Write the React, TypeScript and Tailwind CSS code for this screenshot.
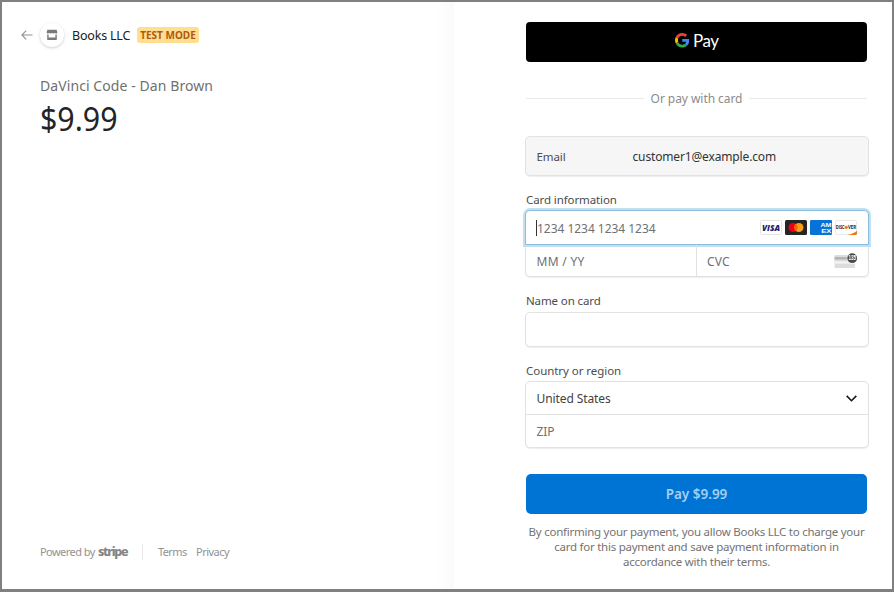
import React from "react";

function StoreIcon() {
  return (
    <svg width="12" height="12" viewBox="0 0 12 12" fill="#7b7b7b" className="block">
      <path d="M1.400 0.800h9.200L11.400 3.200c0 .8-.6 1.300-1.400 1.300-.6 0-1-.2-1.300-.5-.3.3-.8.500-1.300.500S6.300 4.300 6 4c-.3.300-.8.500-1.400.500s-1-.2-1.300-.5c-.3.300-.7.500-1.300.500-.8 0-1.400-.5-1.400-1.300z" />
      <path d="M1.200 5.500h1.400v3.100h6.800V5.500h1.400v4.900c0 .3-.2.500-.5.500H1.700c-.3 0-.5-.2-.5-.5z" />
    </svg>
  );
}

function GoogleG() {
  return (
    <svg width="14.500" height="14.500" viewBox="0 0 48 48" className="mb-[3px] block">
      <path fill="#EA4335" d="M24 9.500c3.540 0 6.710 1.220 9.210 3.600l6.850-6.850C35.900 2.380 30.470 0 24 0 14.620 0 6.510 5.380 2.560 13.220l7.980 6.190C12.430 13.720 17.740 9.500 24 9.500z" />
      <path fill="#4285F4" d="M46.980 24.550c0-1.570-.15-3.090-.38-4.550H24v9.020h12.940c-.58 2.960-2.260 5.480-4.780 7.180l7.730 6c4.510-4.180 7.090-10.360 7.090-17.650z" />
      <path fill="#FBBC05" d="M10.530 28.590c-.48-1.450-.76-2.990-.76-4.590s.27-3.140.76-4.590l-7.980-6.190C.92 16.460 0 20.120 0 24c0 3.880.92 7.540 2.560 10.780l7.970-6.190z" />
      <path fill="#34A853" d="M24 48c6.480 0 11.930-2.130 15.890-5.810l-7.730-6c-2.150 1.450-4.920 2.300-8.160 2.300-6.260 0-11.570-4.220-13.470-9.910l-7.980 6.190C6.510 42.620 14.620 48 24 48z" />
    </svg>
  );
}

function Visa() {
  return (
    <svg width="22" height="15" viewBox="0 0 22 15" className="block">
      <rect x="0.500" y="0.500" width="21" height="14" rx="1.200" fill="#fff" stroke="#e4e4e4" />
      <text x="2" y="10.800" textLength="18" lengthAdjust="spacingAndGlyphs" fontFamily="Open Sans, sans-serif" fontSize="8.800" fontWeight="800" fontStyle="italic" fill="#191e70">VISA</text>
    </svg>
  );
}

function Mastercard() {
  return (
    <svg width="22" height="15" viewBox="0 0 22 15" className="block">
      <rect width="22" height="15" rx="1.500" fill="#252525" />
      <circle cx="8.100" cy="7.500" r="4.600" fill="#eb001b" />
      <circle cx="13.900" cy="7.500" r="4.600" fill="#f79e1b" />
      <path d="M11 3.930a4.600 4.600 0 0 1 0 7.140a4.600 4.600 0 0 1 0-7.140z" fill="#ff5f00" />
    </svg>
  );
}

function Amex() {
  return (
    <svg width="22" height="15" viewBox="0 0 22 15" className="block">
      <rect width="22" height="15" rx="1.200" fill="#0674d6" />
      <text x="10.500" y="6.900" textLength="11" lengthAdjust="spacingAndGlyphs" fontFamily="Liberation Sans, sans-serif" fontSize="6" fontWeight="700" fill="#fff">AM</text>
      <text x="11.200" y="13" textLength="10.300" lengthAdjust="spacingAndGlyphs" fontFamily="Liberation Sans, sans-serif" fontSize="6" fontWeight="700" fill="#fff">EX</text>
    </svg>
  );
}

function Discover() {
  return (
    <svg width="22" height="15" viewBox="0 0 22 15" className="block">
      <rect x="0.500" y="0.500" width="21" height="14" rx="1.200" fill="#fff" stroke="#e8e8e8" />
      <path d="M22 10.800v2.700c0 .8-.5 1.500-1.400 1.500H12.500C16.500 14.200 19.600 12.900 22 10.800z" fill="#f27712" />
      <text x="0.800" y="8.900" textLength="8.800" lengthAdjust="spacingAndGlyphs" fontFamily="Open Sans, sans-serif" fontSize="4.400" fontWeight="700" fill="#222">DISC</text>
      <circle cx="11.200" cy="7.300" r="1.600" fill="#f27712" />
      <text x="13" y="8.900" textLength="8.200" lengthAdjust="spacingAndGlyphs" fontFamily="Open Sans, sans-serif" fontSize="4.400" fontWeight="700" fill="#222">VER</text>
    </svg>
  );
}

function CvcIcon() {
  return (
    <svg width="24" height="20" viewBox="0 -2 24 20" className="block">
      <rect x="0.500" y="2" width="20.500" height="13" rx="1.200" fill="#dcdcdc" />
      <rect x="0.500" y="4" width="20.500" height="2.600" fill="#b5b5b5" />
      <rect x="0.500" y="8.300" width="20.500" height="2.300" fill="#f3f3f3" />
      <circle cx="18.200" cy="5.200" r="5.400" fill="#fff" />
      <circle cx="18.200" cy="5.200" r="4.900" fill="#4a4a4a" />
      <text x="14.500" y="7.400" textLength="7.400" lengthAdjust="spacingAndGlyphs" fontFamily="Liberation Sans, sans-serif" fontSize="6.400" fontWeight="600" fill="#fff">135</text>
    </svg>
  );
}

const box = "rounded-[5px] border border-[#e2e2e2] bg-white shadow-[0_1px_1px_rgba(0,0,0,0.07)]";
const label = "ml-[2px] block h-[18px] text-[11.500px] leading-[18px] text-[#4c4c4c]";

export default function App() {
  return (
    <div className="flex h-[592px] w-[894px] overflow-hidden border-2 border-b-3 border-[#827f7f] bg-white font-['Noto_Sans',sans-serif] text-[12px] whitespace-nowrap text-[#6f7175]">
      <aside className="flex w-[452px] shrink-0 flex-col bg-[linear-gradient(to_right,#fff_434px,#fafafa_452px)] pt-[19px] pr-4 pb-[28px] pl-[19px]">
        <header className="flex h-[27px] items-center">
          <svg width="12" height="12" viewBox="0 0 12 12" fill="none" stroke="#929292" strokeWidth="1.100" className="block">
            <path d="M11.500 6H1M5.200 1.700L0.900 6l4.300 4.300" />
          </svg>
          <div className="ml-[7px] flex size-[24px] items-center justify-center rounded-full bg-white shadow-[0_1px_3px_rgba(0,0,0,0.2)]">
            <StoreIcon />
          </div>
          <span className="ml-2 w-[58px] pt-[3px] text-[12.500px] tracking-[-0.2px] text-[#202020]">Books LLC</span>
          <span className="ml-[7px] flex h-4 w-[62px] items-center justify-center rounded-[3px] bg-[#ffde92] pt-px text-[10px] font-bold text-[#ae5a0c]">TEST MODE</span>
        </header>
        <div className="mt-[28px] ml-[19px]">
          <div className="text-[14px] leading-5 tracking-[0.08px] text-[#707070]">DaVinci Code - Dan Brown</div>
          <div className="mt-[3px] w-[84px] origin-left scale-x-[0.92] text-[33px] leading-[40px] text-[#242424]">$9.99</div>
        </div>
        <footer className="mt-auto ml-[19px] flex h-[18px] items-center text-[11px] text-[#929292]">
          <span className="w-[55px] tracking-[-0.55px]">Powered by</span>
          <span className="ml-[3px] w-[30px] text-[12.500px] font-extrabold tracking-[-1.3px] text-[#858585]">stripe</span>
          <span className="ml-[14px] h-4 w-px bg-[#e8e8e8]" />
          <span className="ml-[15px] w-[29px] tracking-[-0.6px]">Terms</span>
          <span className="ml-[9px] tracking-[-0.500px]">Privacy</span>
        </footer>
      </aside>

      <main className="ml-[70px] flex w-[346px] shrink-0 flex-col pt-5">
        <button className="mr-[3px] ml-[2px] flex h-[40px] items-center justify-center rounded-[4px] bg-black">
          <GoogleG />
          <span className="mb-[2px] ml-[4px] font-['Lato',sans-serif] text-[17px] leading-5 tracking-[-0.500px] text-white">Pay</span>
        </button>
        <div className="mr-[3px] ml-[2px] mt-[26px] flex h-5 items-center">
          <span className="h-px flex-1 bg-[#e9e9e9]" />
          <span className="mx-[7px] pt-px tracking-[-0.06px] text-[#8c8c8c]">Or pay with card</span>
          <span className="h-px flex-1 bg-[#e9e9e9]" />
        </div>
        <div className={`${box} mx-px mt-[28px] flex h-[40px] items-center bg-[#f6f6f6]! pt-px pl-[10.500px] text-[#4c4c4c]`}>
          <span className="w-[96px] text-[11.500px] tracking-[-0.1px]">Email</span>
          <span className="tracking-[-0.15px] text-[#333]">customer1@example.com</span>
        </div>

        <label className={`${label} mt-[15px] tracking-[-0.1px]`}>Card information</label>
        <div className={`${box} mx-px mt-px h-[67px]`}>
          <div className="-m-px flex h-[35px] items-center rounded-t-[5px] border border-[#88bddc] bg-white pr-[11px] pl-[10px] shadow-[0_0_0_2px_#c3e0f1]">
            <span className="h-4 w-px bg-[#333]" />
            <span className="flex-1 pt-[2px] tracking-[-0.03px]">1234 1234 1234 1234</span>
            <div className="flex gap-[3px]">
              <Visa /><Mastercard /><Amex /><Discover />
            </div>
          </div>
          <div className="flex h-[33px] pt-px">
            <div className="flex w-[171px] items-center border-r border-[#e2e2e2] pt-px pl-[10.500px] tracking-[0.3px]">MM / YY</div>
            <div className="flex flex-1 items-center justify-between pr-[10px] pl-[10px]">
              <span className="pt-px tracking-[0.2px]">CVC</span><CvcIcon />
            </div>
          </div>
        </div>

        <label className={`${label} mt-[15px] tracking-[-0.12px]`}>Name on card</label>
        <div className={`${box} mx-px mt-[2px] h-[35px]`} />

        <label className={`${label} mt-[15px] tracking-[-0.05px]`}>Country or region</label>
        <div className={`${box} mx-px mt-px h-[67px]`}>
          <div className="flex h-[33px] items-center justify-between border-b border-[#e2e2e2] pt-px pr-[11px] pl-[10.500px] text-[#424242]">
            <span className="tracking-[-0.1px]">United States</span>
            <svg width="11" height="7" viewBox="0 0 11 7" fill="none" stroke="#161616" strokeWidth="1.600" className="block">
              <path d="M0.700 0.900L5.500 5.700L10.300 0.900" />
            </svg>
          </div>
          <div className="flex h-[32px] items-center pt-px pl-[10.500px] tracking-[-0.1px]">ZIP</div>
        </div>

        <button className="mr-[3px] ml-[2px] mt-[26px] flex h-[40px] items-center justify-center rounded-[5px] bg-[#0074d4] pt-px text-[13.500px] font-semibold text-[#a3cff2]">Pay $9.99</button>
        <div className="mt-[10px] mr-px text-center text-[11.500px] leading-[15px] tracking-[-0.25px] text-[#737373]">
          <div>By confirming your payment, you allow Books LLC to charge your</div>
          <div>card for this payment and save payment information in</div>
          <div>accordance with their terms.</div>
        </div>
      </main>
    </div>
  );
}
